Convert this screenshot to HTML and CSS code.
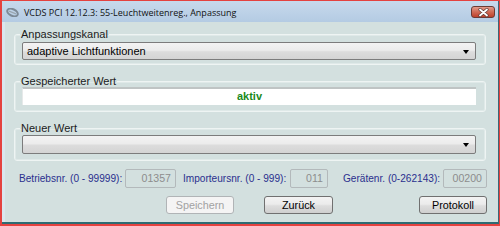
FILE: index.html
```html
<!DOCTYPE html>
<html>
<head>
<meta charset="utf-8">
<link rel="stylesheet" href="styles.css">
</head>
<body>
<div class="window">
  <div class="titlebar">
    <svg class="appicon" width="13" height="9" viewBox="0 0 13 9">
      <ellipse cx="6.5" cy="4.5" rx="5.6" ry="3.3" transform="rotate(25 6.5 4.5)" fill="none" stroke="#7d8a96" stroke-width="2"/>
      <path d="M3 3.2 L10 5.8" stroke="#9aa6b0" stroke-width="1.4"/>
    </svg>
    <span class="title">VCDS PCI 12.12.3: 55-Leuchtweitenreg., Anpassung</span>
    <div class="close">
      <svg width="11" height="9" viewBox="0 0 11 9">
        <path d="M2 1.5 L9 7.5 M9 1.5 L2 7.5" stroke="#5c3a36" stroke-width="3.2" stroke-linecap="round"/>
        <path d="M2 1.5 L9 7.5 M9 1.5 L2 7.5" stroke="#ffffff" stroke-width="1.8" stroke-linecap="round"/>
      </svg>
    </div>
  </div>
  <div class="client">
    <fieldset class="group g1">
      <legend>Anpassungskanal</legend>
      <div class="combo"><span>adaptive Lichtfunktionen</span><i class="arrow"></i></div>
    </fieldset>
    <fieldset class="group g2">
      <legend>Gespeicherter Wert</legend>
      <div class="valuebox">aktiv</div>
    </fieldset>
    <fieldset class="group g3">
      <legend>Neuer Wert</legend>
      <div class="combo tall"><span></span><i class="arrow"></i></div>
    </fieldset>
    <div class="numrow">
      <span class="nlabel l1">Betriebsnr. (0 - 99999):</span>
      <span class="num n1">01357</span>
      <span class="nlabel l2">Importeursnr. (0 - 999):</span>
      <span class="num n2">011</span>
      <span class="nlabel l3">Gerätenr. (0-262143):</span>
      <span class="num n3">00200</span>
    </div>
    <div class="btnrow">
      <button class="btn disabled b1">Speichern</button>
      <button class="btn b2">Zurück</button>
      <button class="btn b3">Protokoll</button>
    </div>
  </div>
</div>
</body>
</html>
```
FILE: styles.css
```css
html, body {
  margin: 0;
  padding: 0;
  width: 500px;
  height: 226px;
  overflow: hidden;
  background: #e4423f;
}
.window {
  margin: 1px 1px 0 2px;
  width: 497px;
  height: 223px;
  box-sizing: border-box;
  display: flex;
  flex-direction: column;
  background: #d3e0df;
  border-right: 1px solid #3c6878;
  border-bottom: 2px solid #2e6a72;
  font-family: "Liberation Sans", Arial, sans-serif;
  font-size: 10.4px;
}
.titlebar {
  height: 21px;
  flex: none;
  display: flex;
  align-items: center;
  background: linear-gradient(#c7d9ec, #b4cbe3);
  position: relative;
}
.appicon {
  margin-left: 4px;
  margin-right: 5px;
  margin-top: 2px;
}
.title {
  font-family: "Open Sans", "Noto Sans", sans-serif;
  font-size: 9px;
  color: #111;
  margin-top: 1px;
}
.close {
  position: absolute;
  left: 469px;
  top: 5px;
  width: 24px;
  height: 12px;
  box-sizing: border-box;
  border: 1px solid #6b3b34;
  border-radius: 3px;
  background: linear-gradient(#e29a8a, #cf6a55 50%, #bf402a);
  display: flex;
  align-items: center;
  justify-content: center;
}
.client {
  flex: 1;
  padding: 6px 0 0 9px;
  border-left: 3px solid #dae6ee;
}
.group {
  margin: 0;
  width: 472px;
  box-sizing: border-box;
  border: 1px solid #eef4f3;
  border-radius: 3px;
  padding: 2px 9px 4px 7px;
  box-shadow: inset 0 0 0 1px #dfe9e8;
}
.group legend {
  padding: 0 1px;
  margin-left: -2px;
  line-height: 12px;
  color: #1b1b1b;
  font-size: 11px;
}
.g2 { margin-top: 10px; padding: 0 9px 6px 7px; }
.g3 { margin-top: 10px; padding: 1px 9px 6px 7px; }
.combo {
  height: 18px;
  box-sizing: border-box;
  border: 1px solid #7c7c7c;
  border-radius: 2px;
  background: linear-gradient(#f3f3f3, #ececec 45%, #dcdcdc 55%, #d4d4d4);
  display: flex;
  align-items: center;
  padding: 0 4px;
  color: #000;
  font-size: 11px;
}
.combo.tall { height: 19px; }
.combo span { flex: 1; }
.arrow {
  width: 0;
  height: 0;
  border-left: 3px solid transparent;
  border-right: 3px solid transparent;
  border-top: 4px solid #000;
  margin-right: 2px;
  margin-top: 1px;
}
.valuebox {
  height: 18px;
  box-sizing: border-box;
  background: #fff;
  border-top: 2px solid #bfc4c4;
  border-left: 1px solid #e6e9e9;
  text-align: center;
  color: #1a8a1a;
  font-weight: bold;
  font-size: 11px;
  line-height: 15px;
}
.numrow {
  margin-top: 8px;
  height: 19px;
  display: flex;
  align-items: center;
}
.nlabel {
  color: #2a2f8e;
  font-size: 10.1px;
  white-space: nowrap;
}
.l1 { width: 106px; margin-left: 5px; }
.l2 { width: 107px; margin-left: 7px; }
.l3 { width: 100px; margin-left: 15px; }
.num {
  height: 19px;
  box-sizing: border-box;
  border: 1px solid #b3b9bb;
  border-radius: 2px;
  color: #8d8d8d;
  font-size: 10.6px;
  text-align: right;
  padding-right: 4px;
  line-height: 17px;
  background: #d3e0df;
}
.n1 { width: 51px; }
.n2 { width: 38px; }
.n3 { width: 44px; }
.btnrow {
  margin-top: 8px;
  height: 18px;
  display: flex;
}
.btn {
  height: 18px;
  box-sizing: border-box;
  border: 1px solid #707070;
  border-radius: 3px;
  background: linear-gradient(#f3f3f3, #ebebeb 45%, #dddddd 55%, #cfcfcf);
  font-family: "Liberation Sans", Arial, sans-serif;
  font-size: 10.8px;
  color: #000;
  padding: 0;
  margin: 0;
}
.btn.disabled {
  border-color: #b0b4b6;
  background: #f4f4f4;
  color: #a2a2a2;
}
.b1 { width: 68px; margin-left: 152px; }
.b2 { width: 69px; margin-left: 30px; }
.b3 { width: 68px; margin-left: 86px; }
```
